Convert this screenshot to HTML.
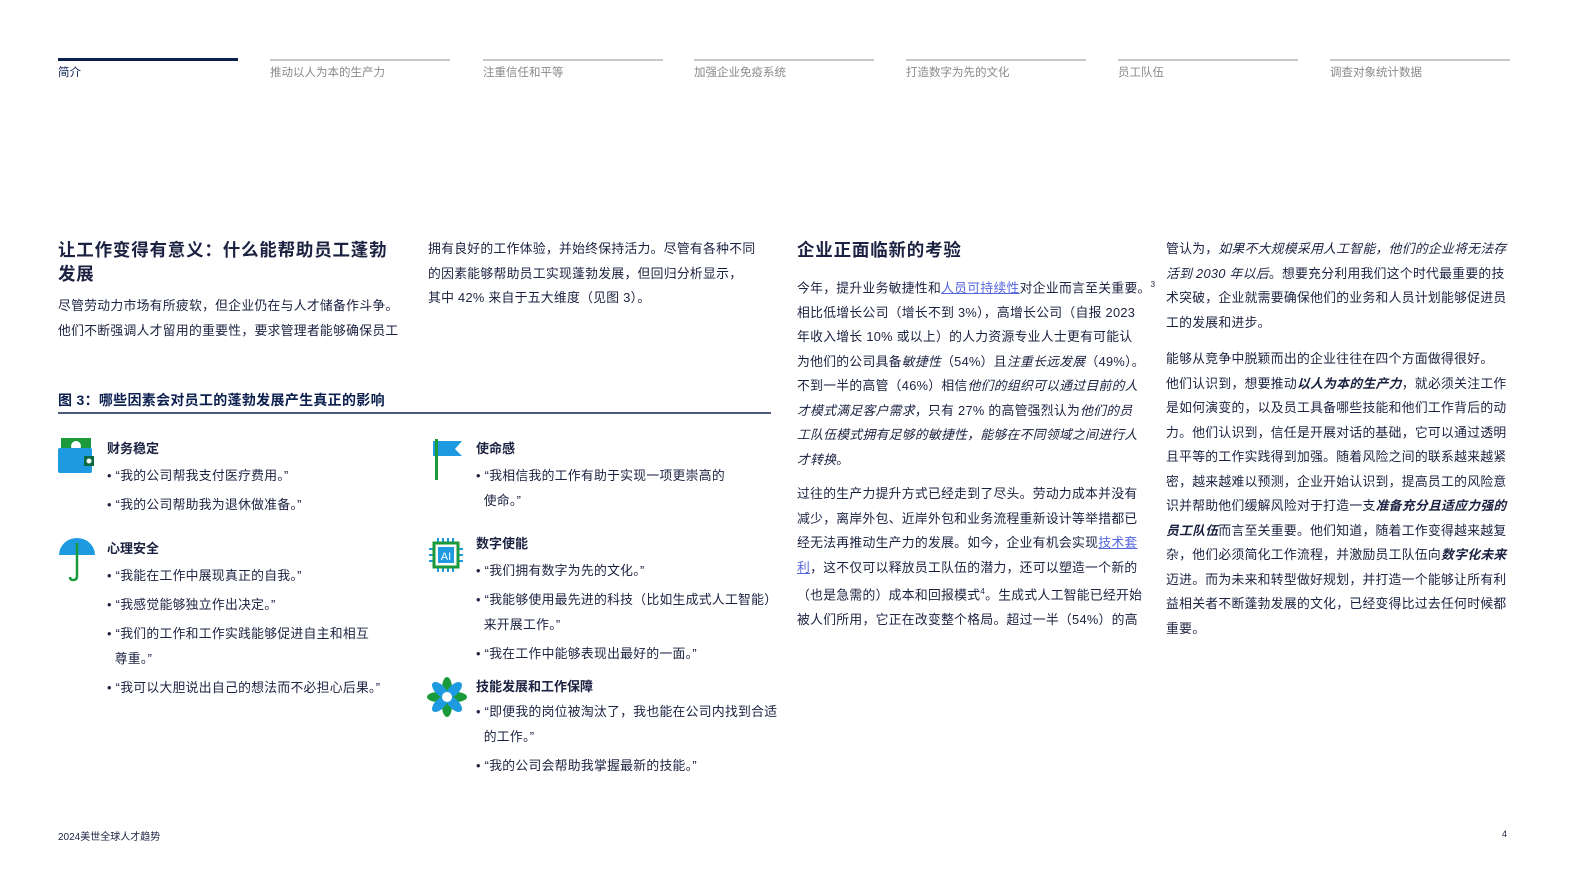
<!DOCTYPE html>
<html><head><meta charset="utf-8"><style>
*{margin:0;padding:0;box-sizing:border-box}
body{width:1587px;height:893px;background:#fff;position:relative;overflow:hidden;font-family:"Liberation Sans","Noto Sans CJK SC",sans-serif;color:#1b2140}
.a{position:absolute;white-space:nowrap}
.nav{position:absolute;top:59px;width:180px;border-top:2px solid #c8c8c8;font-size:11.5px;color:#8a8a8a;padding-top:3px}
.nav.on{border-top:3px solid #0b1f4f;color:#0b1f4f;top:58px}
.p{font-size:12.8px;line-height:24.5px;letter-spacing:0.3px}
.h{font-size:17.5px;font-weight:bold;line-height:24px;letter-spacing:0.8px}
.lk{color:#5566dd;text-decoration:underline}
.sub{font-size:13px;font-weight:bold}
.b{font-size:12.8px;line-height:24.5px;letter-spacing:0.3px}
.b::before{content:"• ";}
</style></head><body>
<div class="nav on" style="left:58px">简介</div>
<div class="nav" style="left:270px">推动以人为本的生产力</div>
<div class="nav" style="left:483px">注重信任和平等</div>
<div class="nav" style="left:694px">加强企业免疫系统</div>
<div class="nav" style="left:906px">打造数字为先的文化</div>
<div class="nav" style="left:1118px">员工队伍</div>
<div class="nav" style="left:1330px">调查对象统计数据</div>

<div class="a h" style="left:58px;top:238px">让工作变得有意义：什么能帮助员工蓬勃<br>发展</div>
<div class="a p" style="left:58px;top:294px">尽管劳动力市场有所疲软，但企业仍在与人才储备作斗争。<br>他们不断强调人才留用的重要性，要求管理者能够确保员工</div>
<div class="a p" style="left:428px;top:237px">拥有良好的工作体验，并始终保持活力。尽管有各种不同<br>的因素能够帮助员工实现蓬勃发展，但回归分析显示，<br>其中 42% 来自于五大维度（见图 3）。</div>

<div class="a" style="left:58px;top:390px;font-size:14px;font-weight:bold;color:#0b1f4f;letter-spacing:0.3px">图 3：哪些因素会对员工的蓬勃发展产生真正的影响</div>
<div class="a" style="left:58px;top:412px;width:713px;border-top:2px solid #4d5a7a"></div>

<svg class="a" style="left:58px;top:438px" width="38" height="36"><rect x="3" y="0" width="30" height="12" fill="#1a9a3a"/><circle cx="18" cy="8" r="5" fill="#fff"/><rect x="0" y="10" width="34" height="25" rx="2" fill="#1e9be0"/><rect x="26" y="18" width="10" height="10" fill="#0a6a40"/><circle cx="31" cy="23" r="2.5" fill="#fff"/></svg>
<svg class="a" style="left:58px;top:538px" width="38" height="44"><path d="M1 17 A18 17 0 0 1 37 17 Z" fill="#1e9be0"/><path d="M19 5 V38 Q19 42 15 42 Q12 42 12 39" stroke="#1a9a3a" stroke-width="2.5" fill="none"/></svg>
<svg class="a" style="left:430px;top:438px" width="34" height="44"><path d="M3 3 H32 L25 11 L32 18 H3 Z" fill="#1e9be0"/><rect x="5" y="1" width="3" height="41" fill="#1a9a3a"/></svg>
<svg class="a" style="left:427px;top:536px" width="38" height="38"><g stroke="#1e9be0" stroke-width="2"><path d="M11 2v6M16 2v6M21 2v6M26 2v6M11 30v6M16 30v6M21 30v6M26 30v6M2 13h6M2 19h6M2 25h6M30 13h6M30 19h6M30 25h6"/></g><rect x="7" y="7" width="24" height="24" fill="#fff" stroke="#1a9a3a" stroke-width="3"/><rect x="11" y="11" width="16" height="16" fill="#1e9be0"/><text x="19" y="24" font-size="11" fill="#fff" text-anchor="middle" font-family="Liberation Sans">AI</text></svg>
<svg class="a" style="left:426px;top:676px" width="42" height="42"><g transform="translate(21 21)"><g fill="#1a9a3a"><ellipse rx="5" ry="11" transform="rotate(0) translate(0 -9)"/><ellipse rx="5" ry="11" transform="rotate(90) translate(0 -9)"/><ellipse rx="5" ry="11" transform="rotate(180) translate(0 -9)"/><ellipse rx="5" ry="11" transform="rotate(270) translate(0 -9)"/></g><g fill="#1e9be0"><ellipse rx="5" ry="10" transform="rotate(45) translate(0 -10)"/><ellipse rx="5" ry="10" transform="rotate(135) translate(0 -10)"/><ellipse rx="5" ry="10" transform="rotate(225) translate(0 -10)"/><ellipse rx="5" ry="10" transform="rotate(315) translate(0 -10)"/></g><circle r="5" fill="#fff"/></g></svg>

<div class="a sub" style="left:107px;top:438px">财务稳定</div>
<div class="a b" style="left:107px;top:464px">“我的公司帮我支付医疗费用。”</div>
<div class="a b" style="left:107px;top:493px">“我的公司帮助我为退休做准备。”</div>
<div class="a sub" style="left:107px;top:538px">心理安全</div>
<div class="a b" style="left:107px;top:564px">“我能在工作中展现真正的自我。”</div>
<div class="a b" style="left:107px;top:593px">“我感觉能够独立作出决定。”</div>
<div class="a b" style="left:107px;top:622px">“我们的工作和工作实践能够促进自主和相互<br>&nbsp;&nbsp;尊重。”</div>
<div class="a b" style="left:107px;top:676px">“我可以大胆说出自己的想法而不必担心后果。”</div>

<div class="a sub" style="left:476px;top:438px">使命感</div>
<div class="a b" style="left:476px;top:464px">“我相信我的工作有助于实现一项更崇高的<br>&nbsp;&nbsp;使命。”</div>
<div class="a sub" style="left:476px;top:533px">数字使能</div>
<div class="a b" style="left:476px;top:559px">“我们拥有数字为先的文化。”</div>
<div class="a b" style="left:476px;top:588px">“我能够使用最先进的科技（比如生成式人工智能）<br>&nbsp;&nbsp;来开展工作。”</div>
<div class="a b" style="left:476px;top:642px">“我在工作中能够表现出最好的一面。”</div>
<div class="a sub" style="left:476px;top:676px">技能发展和工作保障</div>
<div class="a b" style="left:476px;top:700px">“即便我的岗位被淘汰了，我也能在公司内找到合适<br>&nbsp;&nbsp;的工作。”</div>
<div class="a b" style="left:476px;top:754px">“我的公司会帮助我掌握最新的技能。”</div>

<div class="a h" style="left:797px;top:238px">企业正面临新的考验</div>
<div class="a p" style="left:797px;top:273px">今年，提升业务敏捷性和<span class="lk">人员可持续性</span>对企业而言至关重要。<sup style="font-size:8px">3</sup><br>相比低增长公司（增长不到 3%），高增长公司（自报 2023<br>年收入增长 10% 或以上）的人力资源专业人士更有可能认<br>为他们的公司具备<i>敏捷性</i>（54%）且<i>注重长远发展</i>（49%）。<br>不到一半的高管（46%）相信<i>他们的组织可以通过目前的人<br>才模式满足客户需求</i>，只有 27% 的高管强烈认为<i>他们的员<br>工队伍模式拥有足够的敏捷性，能够在不同领域之间进行人<br>才转换</i>。</div>
<div class="a p" style="left:797px;top:482px">过往的生产力提升方式已经走到了尽头。劳动力成本并没有<br>减少，离岸外包、近岸外包和业务流程重新设计等举措都已<br>经无法再推动生产力的发展。如今，企业有机会实现<span class="lk">技术套<br>利</span>，这不仅可以释放员工队伍的潜力，还可以塑造一个新的<br>（也是急需的）成本和回报模式<sup style="font-size:8px">4</sup>。生成式人工智能已经开始<br>被人们所用，它正在改变整个格局。超过一半（54%）的高</div>

<div class="a p" style="left:1166px;top:237px">管认为，<i>如果不大规模采用人工智能，他们的企业将无法存<br>活到 2030 年以后</i>。想要充分利用我们这个时代最重要的技<br>术突破，企业就需要确保他们的业务和人员计划能够促进员<br>工的发展和进步。</div>
<div class="a p" style="left:1166px;top:347px">能够从竞争中脱颖而出的企业往往在四个方面做得很好。<br>他们认识到，想要推动<b><i>以人为本的生产力</i></b>，就必须关注工作<br>是如何演变的，以及员工具备哪些技能和他们工作背后的动<br>力。他们认识到，信任是开展对话的基础，它可以通过透明<br>且平等的工作实践得到加强。随着风险之间的联系越来越紧<br>密，越来越难以预测，企业开始认识到，提高员工的风险意<br>识并帮助他们缓解风险对于打造一支<b><i>准备充分且适应力强的<br>员工队伍</i></b>而言至关重要。他们知道，随着工作变得越来越复<br>杂，他们必须简化工作流程，并激励员工队伍向<b><i>数字化未来</i></b><br>迈进。而为未来和转型做好规划，并打造一个能够让所有利<br>益相关者不断蓬勃发展的文化，已经变得比过去任何时候都<br>重要。</div>

<div class="a" style="left:58px;top:828px;font-size:10px">2024美世全球人才趋势</div>
<div class="a" style="left:1502px;top:829px;font-size:9px">4</div>
</body></html>
